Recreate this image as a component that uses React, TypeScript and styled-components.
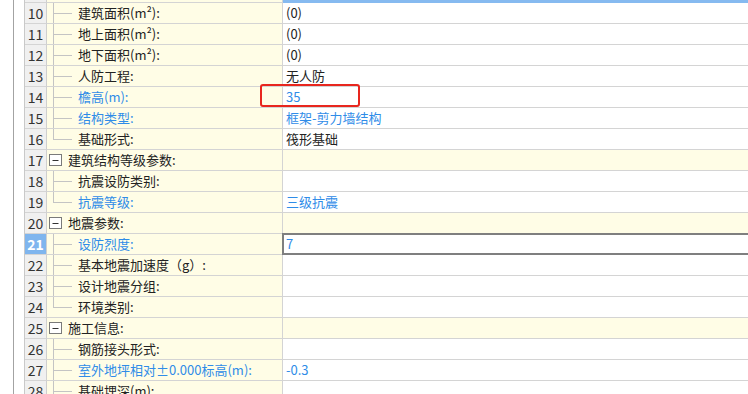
import React from "react";
import styled, { createGlobalStyle } from "styled-components";

const GlobalStyle = createGlobalStyle`
  html, body {
    margin: 0;
    padding: 0;
    background: #ffffff;
    overflow: hidden;
  }
  body {
    font-family: "Microsoft YaHei", "Noto Sans CJK SC", "Noto Sans", sans-serif;
    font-size: 13px;
    color: #222222;
  }
`;

type Param = {
  no: number;
  label: string;
  value?: string;
  group?: boolean;
  last?: boolean;
  accent?: boolean;
  marked?: boolean;
  editing?: boolean;
};

const params: Param[] = [
  { no: 10, label: "建筑面积(m²):", value: "(0)" },
  { no: 11, label: "地上面积(m²):", value: "(0)" },
  { no: 12, label: "地下面积(m²):", value: "(0)" },
  { no: 13, label: "人防工程:", value: "无人防" },
  { no: 14, label: "檐高(m):", value: "35", accent: true, marked: true },
  { no: 15, label: "结构类型:", value: "框架-剪力墙结构", accent: true },
  { no: 16, label: "基础形式:", value: "筏形基础", last: true },
  { no: 17, label: "建筑结构等级参数:", group: true },
  { no: 18, label: "抗震设防类别:" },
  { no: 19, label: "抗震等级:", value: "三级抗震", accent: true, last: true },
  { no: 20, label: "地震参数:", group: true },
  { no: 21, label: "设防烈度:", value: "7", accent: true, editing: true },
  { no: 22, label: "基本地震加速度（g）:" },
  { no: 23, label: "设计地震分组:" },
  { no: 24, label: "环境类别:", last: true },
  { no: 25, label: "施工信息:", group: true },
  { no: 26, label: "钢筋接头形式:" },
  { no: 27, label: "室外地坪相对±0.000标高(m):", value: "-0.3", accent: true },
  { no: 28, label: "基础埋深(m):" },
];

const Page = styled.div`
  display: flex;
  height: 100vh;
  overflow: hidden;
`;

const Gutter = styled.div`
  width: 24px;
  flex: none;
  border-right: 1px solid #c9c9c9;
  display: flex;
`;

const GutterRule = styled.div`
  width: 13px;
  border-right: 1px solid #a3a3a3;
`;

const Grid = styled.div`
  flex: 1;
  display: flex;
  flex-direction: column;
  overflow: hidden;
`;

const Row = styled.div`
  display: flex;
  height: 21px;
  flex: none;
`;

const TopRow = styled(Row)`
  height: 3px;
`;

const NumCell = styled.div<{ $selected?: boolean }>`
  width: 22px;
  flex: none;
  box-sizing: border-box;
  border-right: 1px solid #cfcfcf;
  border-bottom: 1px solid #d4d4d4;
  background: ${(p) => (p.$selected ? "#7fb5ee" : "#f0f0f0")};
  color: ${(p) => (p.$selected ? "#ffffff" : "#333333")};
  font-weight: ${(p) => (p.$selected ? 700 : 400)};
  font-size: 14px;
  line-height: 20px;
  text-align: center;
`;

const LabelCell = styled.div<{ $accent?: boolean }>`
  width: 236px;
  flex: none;
  box-sizing: border-box;
  border-right: 1px solid #d4d4d4;
  border-bottom: 1px solid #d4d4d4;
  background: #fffde6;
  display: flex;
  align-items: center;
  color: ${(p) => (p.$accent ? "#2f8ce8" : "#222222")};
  white-space: nowrap;
`;

const Tree = styled.svg`
  flex: none;
  display: block;
`;

const LabelText = styled.span<{ $group?: boolean }>`
  margin-left: ${(p) => (p.$group ? "2px" : "3px")};
  line-height: 20px;
`;

const ValueCell = styled.div<{ $group?: boolean; $accent?: boolean }>`
  flex: 1;
  position: relative;
  box-sizing: border-box;
  border-bottom: 1px solid #d4d4d4;
  background: ${(p) => (p.$group ? "#fffde6" : "#ffffff")};
  color: ${(p) => (p.$accent ? "#2f8ce8" : "#222222")};
  padding-left: 3px;
  line-height: 20px;
  white-space: nowrap;
`;

const TopValue = styled.div`
  flex: 1;
  background: #86baf0;
`;

const TopLabel = styled.div`
  width: 236px;
  flex: none;
  box-sizing: border-box;
  border-right: 1px solid #d4d4d4;
  border-bottom: 1px solid #d4d4d4;
  background: #fffde6;
`;

const TopNum = styled.div`
  width: 22px;
  flex: none;
  box-sizing: border-box;
  border-right: 1px solid #cfcfcf;
  border-bottom: 1px solid #d4d4d4;
  background: #f0f0f0;
`;

// in-place editor frame drawn over the active value cell
const Editor = styled.div`
  position: absolute;
  left: -1px;
  top: -1px;
  right: -4px;
  bottom: -1px;
  border: 2px solid #7f7f7f;
  pointer-events: none;
`;

// red marker around a value
const Marker = styled.div`
  position: absolute;
  left: -23px;
  top: -3px;
  width: 100px;
  height: 23px;
  box-sizing: border-box;
  border: 2px solid #e8261e;
  border-radius: 3px;
  pointer-events: none;
`;

const line = "#c4c4c4";

const TreeGlyph = ({ group, last }: { group?: boolean; last?: boolean }) =>
  group ? (
    <Tree width={19} height={20} viewBox="0 0 19 20">
      <rect x={2.5} y={4.5} width={12} height={11} fill="#ffffff" stroke="#7a7a7a" />
      <line x1={5.5} y1={10.5} x2={11.5} y2={10.5} stroke="#333333" />
    </Tree>
  ) : (
    <Tree width={28} height={20} viewBox="0 0 28 20">
      <line x1={6.5} y1={0} x2={6.5} y2={last ? 11 : 20} stroke={line} />
      <line x1={7} y1={10.5} x2={25} y2={10.5} stroke={line} />
    </Tree>
  );

export default function App() {
  return (
    <>
      <GlobalStyle />
      <Page>
        <Gutter>
          <GutterRule />
        </Gutter>
        <Grid>
          <TopRow>
            <TopNum />
            <TopLabel />
            <TopValue />
          </TopRow>
          {params.map((p) => (
            <Row key={p.no}>
              <NumCell $selected={p.editing}>{p.no}</NumCell>
              <LabelCell $accent={p.accent}>
                <TreeGlyph group={p.group} last={p.last} />
                <LabelText $group={p.group}>{p.label}</LabelText>
              </LabelCell>
              <ValueCell $group={p.group} $accent={p.accent}>
                {p.value}
                {p.editing && <Editor />}
                {p.marked && <Marker />}
              </ValueCell>
            </Row>
          ))}
        </Grid>
      </Page>
    </>
  );
}
